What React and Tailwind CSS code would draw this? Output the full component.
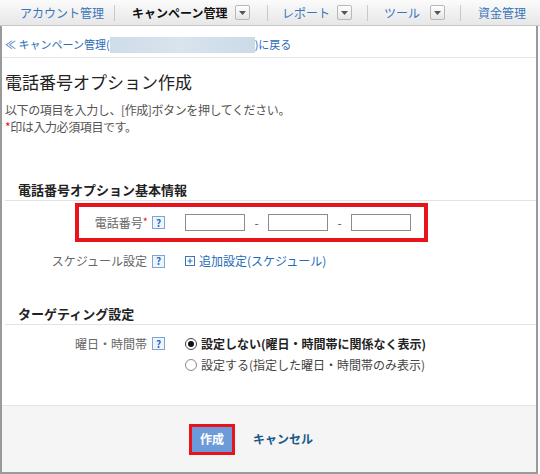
import React from "react";

const Help = () => (
  <span className="inline-flex shrink-0 items-center justify-center w-[13px] h-[13px] border border-[#7fa7d4] bg-[#eef4fb] text-[10px] font-bold leading-none text-[#2a6bc0]">
    ?
  </span>
);

const Dropdown = () => (
  <span className="inline-flex shrink-0 items-center justify-center w-[15px] h-[15px] border border-[#b8b8b8] rounded-[2px] bg-linear-to-b from-white to-[#e6e6e6]">
    <svg width="7" height="4" viewBox="0 0 7 4">
      <path d="M0 0h7L3.5 4z" fill="#555" />
    </svg>
  </span>
);

const Sep = () => <span className="shrink-0 w-px h-[16px] bg-[#c9c9c9]" />;

const Radio = ({ checked }) => (
  <span
    className={
      "inline-flex shrink-0 items-center justify-center w-[12px] h-[12px] rounded-full border bg-white " +
      (checked ? "border-[#444]" : "border-[#888]")
    }
  >
    {checked && <span className="w-[6px] h-[6px] rounded-full bg-[#111]" />}
  </span>
);

const App = () => {
  return (
    <div className="w-[540px] h-[474px] bg-white flex flex-col font-['Noto_Sans_CJK_JP',sans-serif] text-[#333]">
      {/* Top nav */}
      <div className="h-[26px] shrink-0 flex items-center border-b border-[#c8c8c8] bg-linear-to-b from-[#fbfbfb] to-[#e7e7e7] text-[12px] whitespace-nowrap">
        <div className="w-[114px] shrink-0 pl-[20px] text-[#3a75bb]">アカウント管理</div>
        <Sep />
        <div className="w-[152px] shrink-0 pl-[17px] flex items-center">
          <span className="w-[103px] shrink-0 font-bold text-[#111]">キャンペーン管理</span>
          <Dropdown />
        </div>
        <Sep />
        <div className="w-[99px] shrink-0 pl-[14px] flex items-center">
          <span className="w-[55px] shrink-0 text-[#3a75bb]">レポート</span>
          <Dropdown />
        </div>
        <Sep />
        <div className="w-[92px] shrink-0 pl-[16px] flex items-center">
          <span className="w-[46px] shrink-0 text-[#3a75bb]">ツール</span>
          <Dropdown />
        </div>
        <Sep />
        <div className="shrink-0 pl-[17px] text-[#3a75bb]">資金管理</div>
      </div>

      {/* Body */}
      <div className="w-[538px] flex-1 flex flex-col border-l-2 border-r-2 border-b-2 border-[#9a9a9a]">
        {/* Breadcrumb */}
        <div className="h-[32px] shrink-0 flex items-center pt-[6px] pl-[3px] border-b border-[#e3e3e3] text-[11px] text-[#2a6db5] whitespace-nowrap">
          <span>≪ キャンペーン管理(</span>
          <span className="w-[145px] h-[16px] bg-linear-to-r from-[#cfdde8] via-[#d8e4ee] to-[#cbdbe7]" />
          <span>)に戻る</span>
        </div>

        {/* Title */}
        <div className="pl-[3px]">
          <h1 className="mt-[13px] text-[17px] leading-[22px] text-[#222]">電話番号オプション作成</h1>
          <p className="mt-[8px] text-[12px] leading-[17px] tracking-[-0.4px] text-[#555]">
            以下の項目を入力し、[作成]ボタンを押してください。
          </p>
          <p className="text-[12px] leading-[17px] tracking-[-0.4px] text-[#555]">
            <span className="text-[#e0202a]">*</span>印は入力必須項目です。
          </p>
        </div>

        {/* Basic info section */}
        <div className="mt-[46px] ml-[3px] pl-[13px] pb-[1px] border-b border-[#e3e3e3] text-[13px] leading-[18px] font-bold text-[#222]">
          電話番号オプション基本情報
        </div>

        <div className="mt-[2px] ml-[73px] w-[353px] h-[39px] border-4 border-[#e8141c] flex items-center">
          <div className="w-[86px] flex items-center justify-end gap-[4px] text-[12px] text-[#666]">
            <span>
              電話番号<span className="text-[#e0202a] text-[11px] relative -top-[2px]">*</span>
            </span>
            <Help />
          </div>
          <div className="ml-[20px] flex items-center text-[12px] text-[#555]">
            <span className="w-[60px] h-[17px] border border-[#8c8c8c] bg-white" />
            <span className="w-[23px] text-center">-</span>
            <span className="w-[60px] h-[17px] border border-[#8c8c8c] bg-white" />
            <span className="w-[23px] text-center">-</span>
            <span className="w-[60px] h-[17px] border border-[#8c8c8c] bg-white" />
          </div>
        </div>

        <div className="mt-[9px] h-[20px] flex items-center">
          <div className="w-[163px] flex items-center justify-end gap-[5px] text-[12px] text-[#666]">
            <span>スケジュール設定</span>
            <Help />
          </div>
          <div className="ml-[20px] flex items-center gap-[4px] text-[12px] text-[#1e6bb8]">
            <svg width="10" height="10" viewBox="0 0 10 10">
              <rect x="0.5" y="0.5" width="9" height="9" fill="white" stroke="#3a75bb" />
              <path d="M2.5 5h5M5 2.5v5" stroke="#3a75bb" strokeWidth="1.2" />
            </svg>
            <span>追加設定(スケジュール)</span>
          </div>
        </div>

        {/* Targeting section */}
        <div className="mt-[34px] ml-[3px] pl-[13px] pb-[1px] border-b border-[#e3e3e3] text-[13px] leading-[18px] font-bold text-[#222]">
          ターゲティング設定
        </div>

        <div className="mt-[8px] flex items-start">
          <div className="w-[163px] h-[21px] flex items-center justify-end gap-[5px] text-[12px] text-[#666]">
            <span>曜日・時間帯</span>
            <Help />
          </div>
          <div className="ml-[20px] flex flex-col text-[12px]">
            <label className="h-[21px] flex items-center gap-[4px] font-bold text-[#222]">
              <Radio checked />
              <span>設定しない(曜日・時間帯に関係なく表示)</span>
            </label>
            <label className="h-[21px] flex items-center gap-[4px] text-[#444]">
              <Radio />
              <span>設定する(指定した曜日・時間帯のみ表示)</span>
            </label>
          </div>
        </div>

        {/* Footer */}
        <div className="mt-auto h-[67px] shrink-0 flex items-center border-t border-[#e6e6e6] bg-[#f5f5f5]">
          <button className="ml-[187px] w-[46px] h-[31px] border-[3px] border-[#e8141c] bg-[#6d9bd9] text-white text-[12px] font-bold flex items-center justify-center">
            作成
          </button>
          <span className="ml-[18px] text-[12px] font-bold text-[#1a5a8a]">キャンセル</span>
        </div>
      </div>
    </div>
  );
};

export default App;
